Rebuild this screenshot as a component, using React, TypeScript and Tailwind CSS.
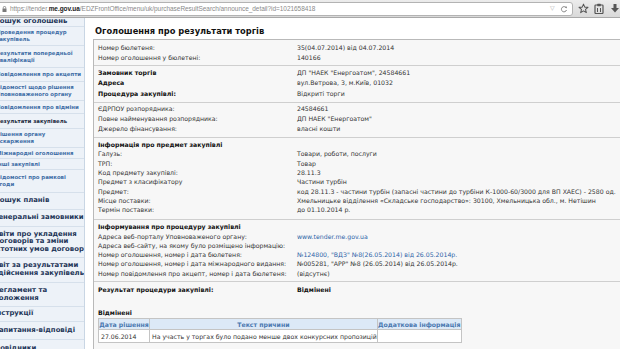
import React from "react";

type SideItem = { t: string[]; kind: "top" | "sub" | "active"; h: number };

const side: SideItem[] = [
  { t: ["Пошук оголошень"], kind: "top", h: 9 },
  { t: ["Проведення процедур", "закупівель"], kind: "sub", h: 19 },
  { t: ["Результати попередньої", "кваліфікації"], kind: "sub", h: 22 },
  { t: ["Повідомлення про акцепти"], kind: "sub", h: 14 },
  { t: ["Відомості щодо рішення", "Уповноваженого органу"], kind: "sub", h: 19 },
  { t: ["Повідомлення про відміни"], kind: "sub", h: 13 },
  { t: ["Результати закупівель"], kind: "active", h: 15 },
  { t: ["Рішення органу", "оскарження"], kind: "sub", h: 19 },
  { t: ["Міжнародні оголошення"], kind: "sub", h: 11 },
  { t: ["Інші закупівлі"], kind: "sub", h: 11 },
  { t: ["Відомості про рамкові", "угоди"], kind: "sub", h: 23 },
  { t: ["Пошук планів"], kind: "top", h: 17 },
  { t: ["Генеральні замовники"], kind: "top", h: 17 },
  { t: ["Звіти про укладення", "договорів та зміни", "істотних умов договору"], kind: "top", h: 31 },
  { t: ["Звіт за результатами", "здійснення закупівель"], kind: "top", h: 25 },
  { t: ["Регламент та", "положення"], kind: "top", h: 24 },
  { t: ["Інструкції"], kind: "top", h: 15 },
  { t: ["Запитання-відповіді"], kind: "top", h: 18 },
  { t: ["Довідники"], kind: "top", h: 18 },
];

function Sidebar() {
  return (
    <div className="w-[85px] shrink-0 overflow-hidden bg-[#edf2f8] border-r border-[#c9d6e4] h-[331px]">
      {side.map((it, i) => {
        const cls =
          it.kind === "top"
            ? "text-[6.9px] leading-[7.6px] font-bold text-[#1d3557] -ml-[6px]"
            : it.kind === "active"
            ? "text-[5.4px] leading-[7px] font-bold text-[#1d2b3f] -ml-[4px]"
            : "text-[5.4px] leading-[7px] font-bold text-[#3f6ea6] -ml-[4px]";
        return (
          <div
            key={i}
            style={{ height: it.h }}
            className="flex flex-col justify-center border-b border-[#d6e0eb] whitespace-nowrap"
          >
            {it.t.map((l, j) => (
              <div key={j} className={cls}>
                {l}
              </div>
            ))}
          </div>
        );
      })}
    </div>
  );
}

function BrowserBar() {
  return (
    <div className="h-[18px] bg-gradient-to-b from-[#ececec] to-[#d9d9d9] border-b border-[#a9a9a9] flex items-center">
      <div className="h-[14px] w-[576px] -ml-[3px] bg-white border border-[#b3b3b3] rounded-[3px] flex items-center pl-[4px] pr-[4px] font-['Liberation_Sans',sans-serif]">
        <svg width="5" height="6" viewBox="0 0 5 6" className="shrink-0">
          <rect x="0.5" y="2.5" width="4" height="3.5" fill="#7a7a7a" />
          <path d="M1.3 2.6 V1.6 A1.2 1.2 0 0 1 3.7 1.6 V2.6" stroke="#7a7a7a" strokeWidth="0.8" fill="none" />
        </svg>
        <span className="ml-[3px] text-[6.5px] text-[#8a8a8a] whitespace-nowrap tracking-[-0.05px]">
          https://tender.<span className="text-[#222] font-bold">me.gov.ua</span>/EDZFrontOffice/menu/uk/purchaseResultSearch/announce_detail?id=1021658418
        </span>
        <div className="flex-1" />
        <span className="text-[6px] text-[#b0b0b0] mr-[5px]">▽</span>
        <svg width="8" height="8" viewBox="0 0 8 8">
          <path d="M6.3 3 A2.6 2.6 0 1 0 6.5 5" stroke="#777" strokeWidth="0.9" fill="none" />
          <path d="M5 1.8 L6.8 1.6 L6.6 3.5 Z" fill="#777" />
        </svg>
      </div>
      <svg width="11" height="11" viewBox="0 0 24 24" className="ml-[5px]">
        <path d="M12 2.5 L14.8 9 L21.8 9.4 L16.4 14 L18.2 21 L12 17.2 L5.8 21 L7.6 14 L2.2 9.4 L9.2 9 Z" fill="none" stroke="#555" strokeWidth="2.2" strokeLinejoin="round" />
      </svg>
      <svg width="10" height="11" viewBox="0 0 20 22" className="ml-[5px]">
        <rect x="2" y="4" width="16" height="17" rx="1.5" fill="none" stroke="#555" strokeWidth="2.4" />
        <rect x="6.5" y="1.5" width="7" height="5" rx="1" fill="#555" />
        <rect x="6" y="10" width="2" height="8" fill="#555" />
        <rect x="12" y="10" width="2" height="8" fill="#555" />
      </svg>
      <svg width="10" height="11" viewBox="0 0 20 22" className="ml-[6px]">
        <rect x="7" y="2" width="6" height="9" fill="#555" />
        <path d="M2 10 H18 L10 19 Z" fill="#555" />
      </svg>
    </div>
  );
}

function Row({ l, v, bold, vClass }: { l: React.ReactNode; v?: React.ReactNode; bold?: boolean; vClass?: string }) {
  return (
    <div className={"grid grid-cols-[199px_1fr] whitespace-nowrap " + (bold ? "font-bold text-[#111]" : "")}>
      <div>{l}</div>
      <div className={vClass}>{v}</div>
    </div>
  );
}

function Section({ children, cls }: { children: React.ReactNode; cls: string }) {
  return <div className={"pl-[4px] border-b border-[#cfcfcf] " + cls}>{children}</div>;
}

export default function App() {
  return (
    <div className="w-[620px] h-[349px] overflow-hidden bg-white font-['DejaVu_Sans',sans-serif] text-[#333]">
      <BrowserBar />
      <div className="flex">
        <Sidebar />
        <div className="flex-1 min-w-0">
          <div className="pl-[10px] pt-[8px] pb-[3px] text-[8.3px] leading-[10px] font-bold text-[#111]">
            Оголошення про результати торгів
          </div>
          <div className="ml-[8px] border-l border-t border-[#b9b9b9] bg-[#f7f7f7] h-[320px] text-[6.2px] leading-[9.7px]">
            <Section cls="pt-[2.7px] pb-[2.7px] leading-[10px]">
              <Row l="Номер бюлетеня:" v="35(04.07.2014) від 04.07.2014" />
              <Row l="Номер оголошення у бюлетені:" v="140166" />
            </Section>
            <Section cls="pt-[1.6px] pb-[2.9px] leading-[10.3px]">
              <div className="grid grid-cols-[199px_1fr] whitespace-nowrap">
                <div className="font-bold text-[#111]">Замовник торгів</div>
                <div>ДП "НАЕК "Енергоатом", 24584661</div>
                <div className="font-bold text-[#111]">Адреса</div>
                <div>вул.Ветрова, 3, м.Київ, 01032</div>
                <div className="font-bold text-[#111]">Процедура закупівлі:</div>
                <div>Відкриті торги</div>
              </div>
            </Section>
            <Section cls="pt-[1.5px] pb-[3.7px]">
              <Row l="ЄДРПОУ розпорядника:" v="24584661" />
              <Row l="Повне найменування розпорядника:" v={'ДП НАЕК "Енергоатом"'} />
              <Row l="Джерело фінансування:" v="власні кошти" />
            </Section>
            <Section cls="pt-[2px] pb-[3.9px] leading-[9.35px]">
              <div className="font-bold text-[#111]">Інформація про предмет закупівлі</div>
              <Row l="Галузь:" v="Товари, роботи, послуги" />
              <Row l="ТРП:" v="Товар" />
              <Row l="Код предмету закупівлі:" v="28.11.3" />
              <Row l="Предмет з класифікатору" v="Частини турбін" />
              <Row
                l="Предмет:"
                v="код 28.11.3 - частини турбін (запасні частини до турбіни К-1000-60/3000 для ВП ХАЕС) - 2580 од."
              />
              <Row
                l="Місце поставки:"
                v="Хмельницьке відділення «Складське господарство»: 30100, Хмельницька обл., м. Нетішин"
              />
              <Row l="Термін поставки:" v="до 01.10.2014 р." />
            </Section>
            <Section cls="pt-[2.6px] pb-[2.8px] leading-[9.3px]">
              <div className="font-bold text-[#111]">Інформування про процедуру закупівлі</div>
              <Row l="Адреса веб-порталу Уповноваженого органу:" v="www.tender.me.gov.ua" vClass="text-[#2f64a8]" />
              <Row l="Адреса веб-сайту, на якому було розміщено інформацію:" v="" />
              <Row
                l="Номер оголошення, номер і дата бюлетеня:"
                v={'№124800, "ВДЗ" №8(26.05.2014) від 26.05.2014р.'}
                vClass="text-[#2f64a8]"
              />
              <Row
                l="Номер оголошення, номер і дата міжнародного видання:"
                v={'№005281, "APP" №8 (26.05.2014) від 26.05.2014р.'}
              />
              <Row l="Номер повідомлення про акцепт, номер і дата бюлетеня:" v="(відсутнє)" />
            </Section>
            <div className="pl-[4px] pt-[3.2px]">
              <Row l="Результат процедури закупівлі:" v="Відмінені" bold />
              <div className="mt-[13.6px] font-bold text-[#111]">Відмінені</div>
              <table className="border-collapse bg-white text-[6.2px] leading-[9px]">
                <thead>
                  <tr className="bg-[#dce9f7] text-[#4a78b0] font-bold">
                    <th className="w-[51px] h-[11px] border border-[#c4c4c4] font-bold text-center">Дата рішення</th>
                    <th className="w-[215px] border border-[#c4c4c4] font-bold text-center">Текст причини</th>
                    <th className="w-[84px] border border-[#c4c4c4] font-bold text-center">Додаткова інформація</th>
                  </tr>
                </thead>
                <tbody>
                  <tr>
                    <td className="h-[13px] border border-[#c4c4c4] pl-[2px]">27.06.2014</td>
                    <td className="border border-[#c4c4c4] pl-[2px] whitespace-nowrap">
                      На участь у торгах було подано менше двох конкурсних пропозицій
                    </td>
                    <td className="border border-[#c4c4c4]"></td>
                  </tr>
                </tbody>
              </table>
            </div>
          </div>
        </div>
      </div>
    </div>
  );
}
